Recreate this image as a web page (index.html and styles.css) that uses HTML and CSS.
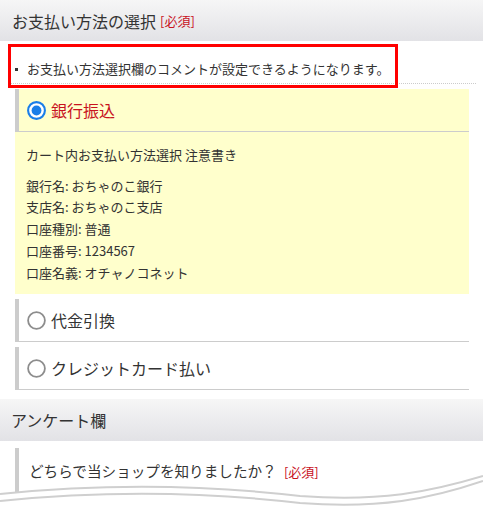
FILE: index.html
```html
<!DOCTYPE html>
<html lang="ja">
<head>
<meta charset="utf-8">
<title>お支払い方法の選択</title>
<link rel="stylesheet" href="styles.css">
</head>
<body>
<div class="page">
  <div class="sec-head">お支払い方法の選択 <span class="req">[必須]</span></div>
  <div class="comment">
    <span class="bullet"></span>お支払い方法選択欄のコメントが設定できるようになります。
    <div class="annot"></div>
  </div>
  <ul class="pay">
    <li class="opt selected">
      <div class="opt-head">
        <svg class="radio" width="19" height="19" viewBox="0 0 19 19"><circle cx="9.5" cy="9.5" r="8.4" fill="#fff" stroke="#1a7ee8" stroke-width="2.1"/><circle cx="9.5" cy="9.5" r="4.9" fill="#1a7ee8"/></svg>
        <span class="opt-label">銀行振込</span>
      </div>
      <div class="opt-body">
        <p class="lead">カート内お支払い方法選択 注意書き</p>
        <p>銀行名: おちゃのこ銀行<br>支店名: おちゃのこ支店<br>口座種別: 普通<br>口座番号: 1234567<br>口座名義: オチャノコネット</p>
      </div>
    </li>
    <li class="opt">
      <div class="opt-head">
        <svg class="radio" width="19" height="19" viewBox="0 0 19 19"><circle cx="9.5" cy="9.5" r="8.4" fill="#fff" stroke="#8d8d8d" stroke-width="1.8"/></svg>
        <span class="opt-label">代金引換</span>
      </div>
    </li>
    <li class="opt">
      <div class="opt-head">
        <svg class="radio" width="19" height="19" viewBox="0 0 19 19"><circle cx="9.5" cy="9.5" r="8.4" fill="#fff" stroke="#8d8d8d" stroke-width="1.8"/></svg>
        <span class="opt-label">クレジットカード払い</span>
      </div>
    </li>
  </ul>
  <div class="sec-head second">アンケート欄</div>
  <div class="question">どちらで当ショップを知りましたか？ <span class="req">[必須]</span></div>
  <svg class="tear" width="483" height="49" viewBox="0 0 483 49">
    <path d="M0,24 C80,16 180,12 300,26 C380,32 430,22 483,6 L483,49 L0,49 Z" fill="#fff"/>
    <path d="M0,24 C80,16 180,12 300,26 C380,32 430,22 483,6" fill="none" stroke="#cfcfcf" stroke-width="2"/>
    <path d="M0,31 C80,23 180,19 300,33 C380,39 430,29 483,11" fill="none" stroke="#cfcfcf" stroke-width="2"/>
  </svg>
</div>
</body>
</html>
```

FILE: styles.css
```css
html, body {
  margin: 0;
  padding: 0;
  background: #fff;
}
body {
  font-family: "Noto Sans CJK JP", "Noto Sans", sans-serif;
  color: #333;
}
.page {
  position: relative;
  width: 483px;
  height: 519px;
  overflow: hidden;
}
.sec-head {
  height: 41px;
  display: flex;
  align-items: center;
  padding-left: 12px;
  font-size: 16px;
  background: linear-gradient(#f6f6f6, #e2e2e6);
  color: #333;
}
.sec-head.second {
  height: 42px;
  margin-top: 9px;
  padding-left: 11px;
}
.req {
  color: #c8121e;
  font-size: 13px;
  margin-left: 4px;
}
.comment {
  position: relative;
  margin: 0 7px 0 8px;
  padding: 18px 0 4px 7px;
  border-bottom: 1px dotted #cccccc;
  font-size: 13px;
  line-height: 20px;
}
.bullet {
  display: inline-block;
  width: 3px;
  height: 3px;
  background: #333;
  vertical-align: middle;
  margin-right: 9px;
  position: relative;
  top: -1px;
}
.annot {
  position: absolute;
  left: 0;
  top: 3px;
  width: 390px;
  height: 44px;
  box-sizing: border-box;
  border: 3px solid #ff0000;
}
.pay {
  list-style: none;
  margin: 5px 14px 0 15px;
  padding: 0;
}
.opt + .opt {
  margin-top: 5px;
}
.opt.selected {
  background: #ffffcc;
}
.opt-head {
  display: flex;
  align-items: center;
  gap: 5px;
  height: 42px;
  border-left: 4px solid #cccccc;
  border-bottom: 1px solid #cccccc;
  padding-left: 8px;
  font-size: 16px;
}
.radio {
  display: block;
  flex: none;
}
.selected .opt-label {
  color: #c8121e;
}
.opt-body {
  padding: 12px 11px 11px 11px;
  font-size: 13px;
  line-height: 21.7px;
}
.opt-body p {
  margin: 0;
}
.opt-body .lead {
  margin-bottom: 9px;
}
.question {
  margin: 7px 0 0 15px;
  border-left: 4px solid #cccccc;
  padding: 12px 0 40px 10px;
  font-size: 14.6px;
  line-height: 22px;
}
.tear {
  position: absolute;
  left: 0;
  top: 470px;
  display: block;
}
```
